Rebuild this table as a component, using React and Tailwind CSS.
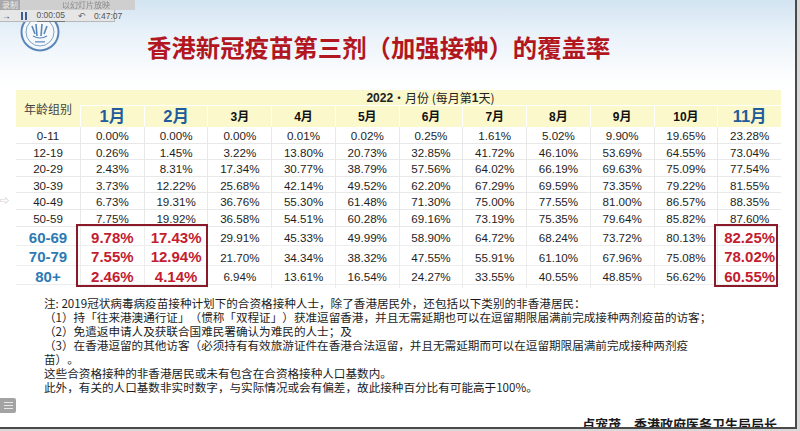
import React from "react";

const FONT = { fontFamily: "'Liberation Sans','Noto Sans CJK SC',sans-serif" };
const CJK = { fontFamily: "'Noto Sans CJK SC','Liberation Sans',sans-serif" };

const months = ["1月", "2月", "3月", "4月", "5月", "6月", "7月", "8月", "9月", "10月", "11月"];

const rows = [
  ["0-11", "0.00%", "0.00%", "0.00%", "0.01%", "0.02%", "0.25%", "1.61%", "5.02%", "9.90%", "19.65%", "23.28%"],
  ["12-19", "0.26%", "1.45%", "3.22%", "13.80%", "20.73%", "32.85%", "41.72%", "46.10%", "53.69%", "64.55%", "73.04%"],
  ["20-29", "2.43%", "8.31%", "17.34%", "30.77%", "38.79%", "57.56%", "64.02%", "66.19%", "69.63%", "75.09%", "77.54%"],
  ["30-39", "3.73%", "12.22%", "25.68%", "42.14%", "49.52%", "62.20%", "67.29%", "69.59%", "73.35%", "79.22%", "81.55%"],
  ["40-49", "6.73%", "19.31%", "36.76%", "55.30%", "61.48%", "71.30%", "75.00%", "77.55%", "81.00%", "86.57%", "88.35%"],
  ["50-59", "7.75%", "19.92%", "36.58%", "54.51%", "60.28%", "69.16%", "73.19%", "75.35%", "79.64%", "85.82%", "87.60%"],
];
const bigRows = [
  ["60-69", "9.78%", "17.43%", "29.91%", "45.33%", "49.99%", "58.90%", "64.72%", "68.24%", "73.72%", "80.13%", "82.25%"],
  ["70-79", "7.55%", "12.94%", "21.70%", "34.34%", "38.32%", "47.55%", "55.91%", "61.10%", "67.96%", "75.08%", "78.02%"],
  ["80+", "2.46%", "4.14%", "6.94%", "13.61%", "16.54%", "24.27%", "33.55%", "40.55%", "48.85%", "56.62%", "60.55%"],
];

const notes = [
  "注: 2019冠状病毒病疫苗接种计划下的合资格接种人士，除了香港居民外，还包括以下类别的非香港居民：",
  "（1）持「往来港澳通行证」（惯称「双程证」）获准逗留香港，并且无需延期也可以在逗留期限届满前完成接种两剂疫苗的访客；",
  "（2）免遣返申请人及获联合国难民署确认为难民的人士；及",
  "（3）在香港逗留的其他访客（必须持有有效旅游证件在香港合法逗留，并且无需延期而可以在逗留期限届满前完成接种两剂疫",
  "苗）。",
  "这些合资格接种的非香港居民或未有包含在合资格接种人口基数内。",
  "此外，有关的人口基数非实时数字，与实际情况或会有偏差，故此接种百分比有可能高于100%。",
];

function Logo() {
  return (
    <svg width="40" height="40" viewBox="0 0 40 40">
      <circle cx="20" cy="20" r="18.5" fill="#f4f8fb" stroke="#5b87b8" strokeWidth="2" />
      <circle cx="20" cy="20" r="14" fill="none" stroke="#7fa3c9" strokeWidth="1" />
      <path d="M12 14 L15 22 M16 12 L17 24 M22 12 L21 24 M27 14 L24 22" stroke="#5b87b8" strokeWidth="1.6" fill="none" />
      <path d="M13 24 Q20 28 27 24" stroke="#5b87b8" strokeWidth="1.2" fill="none" />
      <rect x="15" y="29" width="10" height="1.6" fill="#7fa3c9" />
    </svg>
  );
}

export default function App() {
  return (
    <div className="relative w-[800px] h-[431px] overflow-hidden bg-[#d9d9d9]" style={FONT}>
      <div className="w-[797px] h-[429px] overflow-hidden border-r-2 border-b-2 border-[#4a4a4a] bg-[linear-gradient(to_bottom,#d3e4f2_0px,#eaf2f9_35px,#fbfdfe_75px,#ffffff_90px)]">
        {/* header */}
        <div className="flex h-[90px] items-start">
          <div className="ml-[20px] mt-[12px]">
            <Logo />
          </div>
          <div
            className="ml-[87px] mt-[32px] text-[24.4px] leading-[30px] font-bold text-[#b2161f] whitespace-nowrap [text-spacing-trim:space-all]"
            style={CJK}
          >
            香港新冠疫苗第三剂（加强接种）的覆盖率
          </div>
        </div>

        {/* table */}
        <div className="relative ml-[16px] w-[765px]">
          <div className="grid grid-cols-[64px_repeat(11,minmax(0,1fr))] grid-rows-[16px_21px] bg-[#fbf9cc]">
            <div className="row-span-2 flex items-center justify-center text-[12px] text-[#444]" style={CJK}>
              年龄组别
            </div>
            <div className="col-span-11 flex items-center justify-center text-[12px] text-[#222] border-b border-white">
              <span className="font-bold">2022</span>
              <span style={CJK}>·月份 (每月第</span>
              <span className="font-bold">1</span>
              <span style={CJK}>天)</span>
            </div>
            {months.map((m, i) => {
              const big = i === 0 || i === 1 || i === 10;
              return (
                <div
                  key={m}
                  className={
                    "flex items-center justify-center border-l border-white font-bold " +
                    (big ? "text-[16.5px] text-[#1f5c9b]" : "text-[12px] text-[#111]")
                  }
                >
                  {m}
                </div>
              );
            })}
          </div>

          {rows.map((r) => (
            <div
              key={r[0]}
              className="grid grid-cols-[64px_repeat(11,minmax(0,1fr))] h-[16.6px] border-b border-[#e8e8e8]"
            >
              {r.map((c, i) => (
                <div
                  key={i}
                  className={
                    "flex items-center justify-center text-[11.6px] text-[#1e1e1e] " +
                    (i > 0 ? "border-l border-[#e8e8e8]" : "")
                  }
                >
                  {c}
                </div>
              ))}
            </div>
          ))}

          {bigRows.map((r) => (
            <div
              key={r[0]}
              className="grid grid-cols-[64px_repeat(11,minmax(0,1fr))] h-[19.6px] border-b border-[#ededed]"
            >
              {r.map((c, i) => {
                let cls = "text-[11.6px] text-[#1e1e1e]";
                if (i === 0) cls = "text-[15px] font-bold text-[#2d7ab3]";
                else if (i === 1 || i === 2 || i === 11) cls = "text-[15px] font-bold text-[#c41c30]";
                return (
                  <div
                    key={i}
                    className={
                      "flex items-center justify-center " + cls + (i > 0 ? " border-l border-[#ededed]" : "")
                    }
                  >
                    {c}
                  </div>
                );
              })}
            </div>
          ))}

          <div className="absolute left-[60px] top-[134px] w-[132px] h-[63px] border-2 border-[#8a1a2a]"></div>
          <div className="absolute left-[698px] top-[134px] w-[64px] h-[63px] border-2 border-[#8a1a2a]"></div>
        </div>

        {/* notes */}
        <div
          className="ml-[44px] mt-[11px] text-[11.6px] leading-[14px] text-[#1c1c1c] whitespace-nowrap [text-spacing-trim:space-all]"
          style={CJK}
        >
          {notes.map((n, i) => (
            <div key={i}>{n}</div>
          ))}
        </div>

        <div className="flex justify-end pr-[18px] mt-[22px]">
          <div className="text-[13px] leading-[16px] font-bold text-[#1a1a1a] whitespace-nowrap" style={CJK}>
            卢宠茂　香港政府医务卫生局局长
          </div>
        </div>
      </div>

      {/* player overlay top-left */}
      <div className="absolute left-0 top-0 flex h-[10px] w-[135px] items-center bg-[#cfcfcf] text-[8px] leading-[10px] text-[#555]" style={CJK}>
        <span className="bg-[#a9a9a9] px-[2px] text-[#eee]">录制</span>
        <span className="ml-[42px] text-[#8a8a8a] blur-[0.4px]">以幻灯片放映</span>
      </div>
      <div className="absolute left-0 top-[10px] flex h-[12px] w-[115px] items-center border-b border-r border-[#b8b8b8] bg-[#e6e6e6] text-[8.5px] leading-[12px] text-[#555]">
        <span className="ml-[2px] text-[#444]">→</span>
        <span className="ml-[10px] flex gap-[2px]">
          <span className="block h-[8px] w-[2px] bg-[#3d5f95]"></span>
          <span className="block h-[8px] w-[2px] bg-[#3d5f95]"></span>
        </span>
        <span className="ml-[10px] border-b border-[#777]">0:00:05</span>
        <span className="ml-[13px] text-[#666]">↶</span>
        <span className="ml-[8px]">0:47:07</span>
      </div>

      {/* left side small cursor */}
      <div className="absolute left-0 top-[196px] text-[9px] leading-[10px] text-[#aaa]">⇨</div>
      {/* left bottom menu icon */}
      <div className="absolute left-0 top-[398px] flex h-[15px] w-[16px] flex-col items-center justify-center gap-[2px] rounded-r-[2px] bg-[#a3a3a3]">
        <span className="block h-[1px] w-[9px] bg-[#e8e8e8]"></span>
        <span className="block h-[1px] w-[9px] bg-[#e8e8e8]"></span>
        <span className="block h-[1px] w-[9px] bg-[#e8e8e8]"></span>
      </div>
    </div>
  );
}
